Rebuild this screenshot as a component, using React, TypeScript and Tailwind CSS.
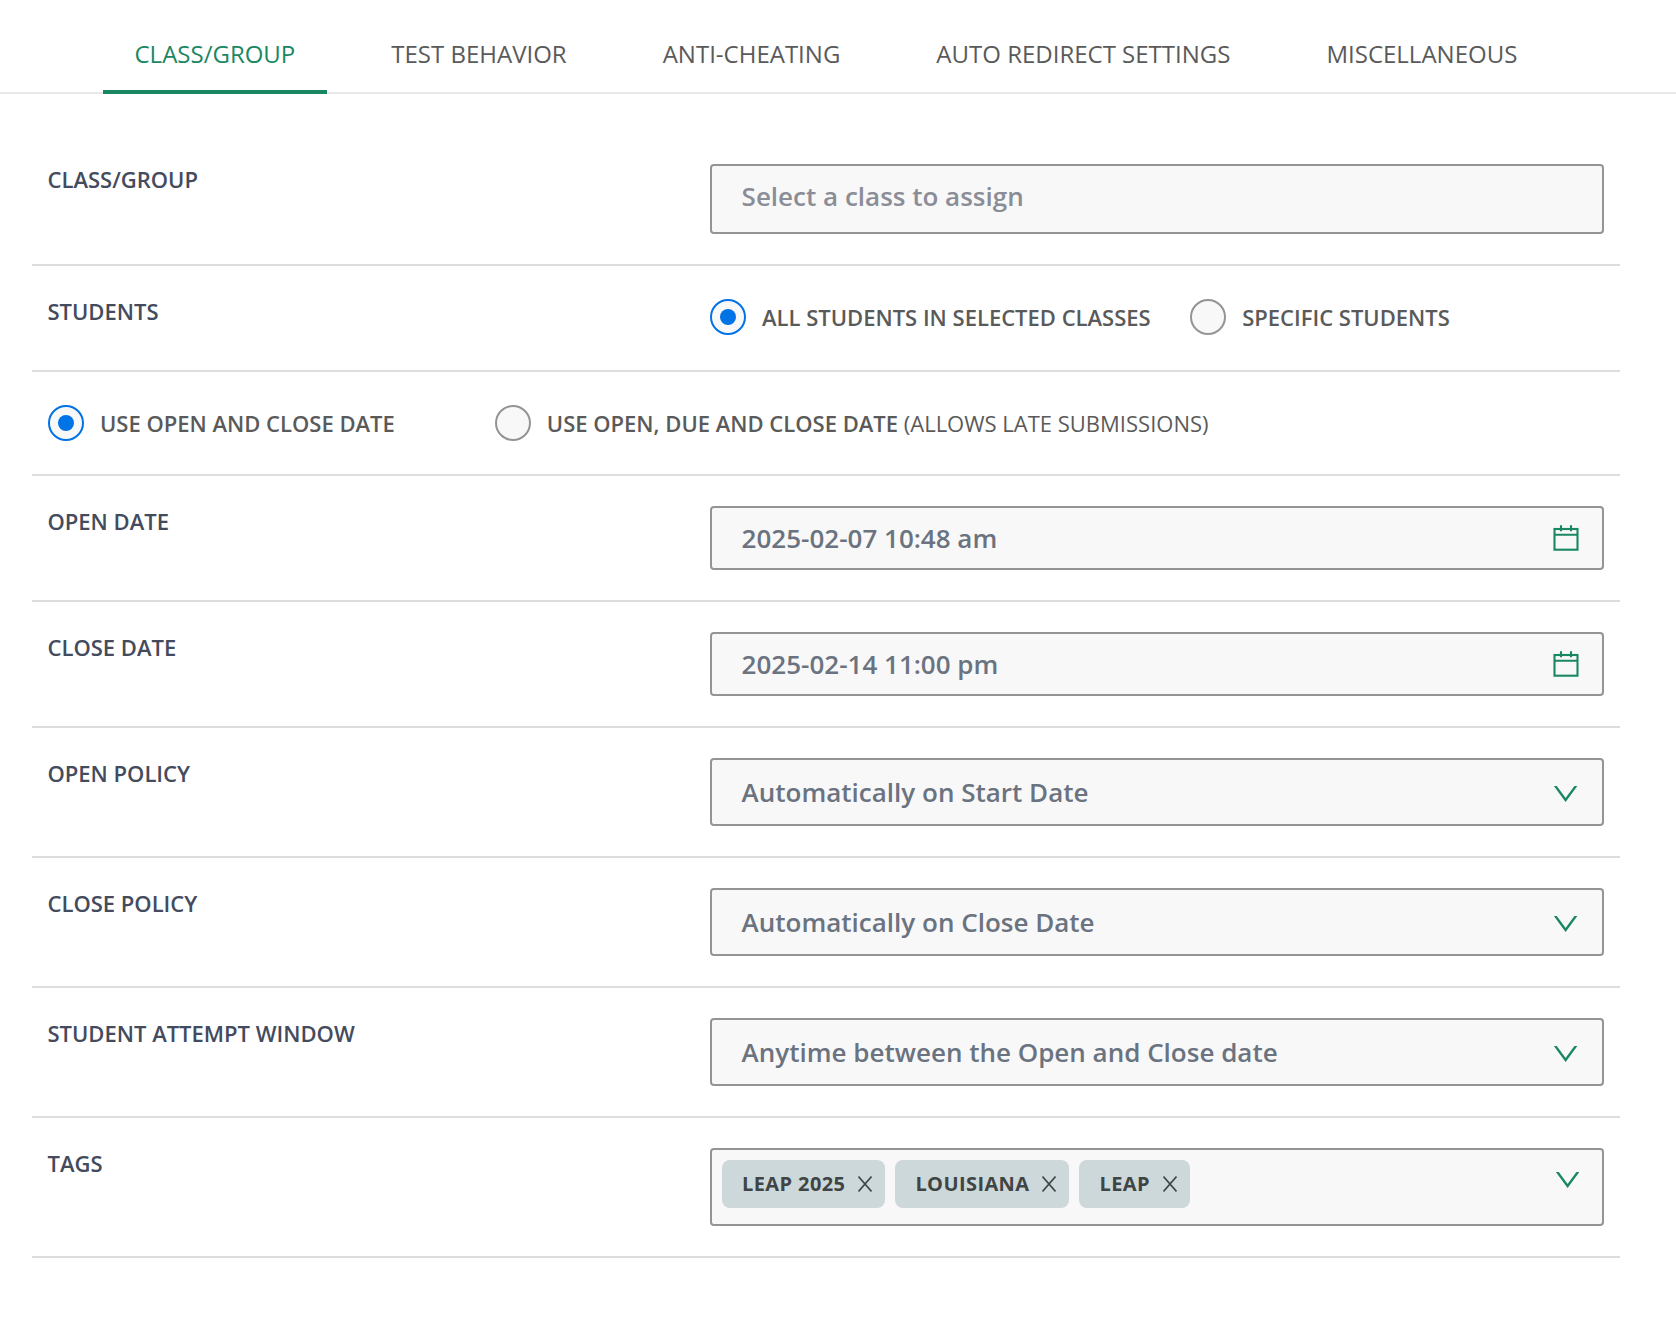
import type { ReactNode } from "react";

const tabs = ["CLASS/GROUP", "TEST BEHAVIOR", "ANTI-CHEATING", "AUTO REDIRECT SETTINGS", "MISCELLANEOUS"];
const tags = ["LEAP 2025", "LOUISIANA", "LEAP"];

const CalendarIcon = () => (
  <svg width="26" height="26" viewBox="0 0 26 26" fill="none" stroke="#1a8763" strokeWidth="2.1" className="shrink-0">
    <rect x="1.5" y="4" width="23" height="20.7" />
    <path d="M1.5 9.8H24.5M8 0.3V6.3M18 0.3V6.3" />
  </svg>
);

const ChevronIcon = () => (
  <svg width="24" height="16" viewBox="0 0 24 16" fill="none" stroke="#1a8763" strokeWidth="2.4" className="shrink-0">
    <path d="M1 -0.4L11.6 14L22.2 -0.4" />
  </svg>
);

const CloseIcon = () => (
  <svg width="14" height="16" viewBox="0 0 14 16" fill="none" stroke="#3f4545" strokeWidth="1.6" className="shrink-0">
    <path d="M0.5 0.5L13.5 15.5M13.5 0.5L0.5 15.5" />
  </svg>
);

const Radio = ({ checked = false, children }: { checked?: boolean; children: ReactNode }) => (
  <label className="flex items-center">
    <span
      className={
        checked
          ? "flex size-9 items-center justify-center rounded-full border-2 border-[#0073e6] bg-[#f8f8f8]"
          : "size-9 rounded-full border-2 border-[#949494] bg-[#f8f8f8]"
      }
    >
      {checked && <span className="size-4 rounded-full bg-[#0073e6]" />}
    </span>
    <span className="ml-4 text-[22px] leading-[34px] font-semibold text-[#5a5a5a]">{children}</span>
  </label>
);

const Row = ({ label, children }: { label: string; children: ReactNode }) => (
  <div className="flex justify-between border-b-2 border-[#dddddd] pr-4 pl-[15.5px] py-[30px]">
    <p className="text-[22px] leading-[31px] font-semibold text-[#434b5d]">{label}</p>
    <div className="w-[894px]">{children}</div>
  </div>
);

const Field = ({ children, className }: { children: ReactNode; className: string }) => (
  <div
    className={`flex justify-between rounded-[4px] border-2 border-[#949494] bg-[#f8f8f8] pl-[29.6px] text-[26px] font-semibold text-[#6a737f] ${className}`}
  >
    {children}
  </div>
);

const DateField = ({ value }: { value: string }) => (
  <Field className="h-16 items-center pr-[23px]">
    <span>{value}</span>
    <CalendarIcon />
  </Field>
);

const SelectField = ({ value }: { value: string }) => (
  <Field className="h-[68px] items-center pr-6">
    <span>{value}</span>
    <span className="pt-1">
      <ChevronIcon />
    </span>
  </Field>
);

const App = () => {
  return (
    <div className="min-h-[1334px] w-[1676px] bg-white font-['Open_Sans',sans-serif]">
      {/* Tabs */}
      <div className="flex h-[94px] items-stretch gap-[32.5px] border-b-2 border-[#e8e8e8] pl-[103px]">
        {tabs.map((tab, index) => (
          <div
            key={tab}
            className={
              index === 0
                ? "-mb-[2px] border-b-4 border-[#1a8763] pt-[36px] pr-8 pl-[31.5px] text-[24px] leading-[36px] whitespace-nowrap text-[#1a8763]"
                : "pt-[36px] pr-8 pl-[31.5px] text-[24px] leading-[36px] whitespace-nowrap text-[#5a5a5a]"
            }
          >
            {tab}
          </div>
        ))}
      </div>

      {/* Settings */}
      <div className="mt-10 mr-14 ml-8">
        <Row label="CLASS/GROUP">
          <Field className="h-[70px] pt-3 leading-[36px]">
            <span className="text-[#8a8d96]">Select a class to assign</span>
          </Field>
        </Row>

        <Row label="STUDENTS">
          <div className="flex h-[44px] items-start gap-[39.5px] pt-[3px]">
            <Radio checked>ALL STUDENTS IN SELECTED CLASSES</Radio>
            <Radio>SPECIFIC STUDENTS</Radio>
          </div>
        </Row>

        <div className="flex h-[104px] items-start gap-[100px] border-b-2 border-[#dddddd] px-4 pt-[33px]">
          <Radio checked>USE OPEN AND CLOSE DATE</Radio>
          <Radio>
            USE OPEN, DUE AND CLOSE DATE <span className="font-normal">(ALLOWS LATE SUBMISSIONS)</span>
          </Radio>
        </div>

        <Row label="OPEN DATE">
          <DateField value="2025-02-07 10:48 am" />
        </Row>
        <Row label="CLOSE DATE">
          <DateField value="2025-02-14 11:00 pm" />
        </Row>
        <Row label="OPEN POLICY">
          <SelectField value="Automatically on Start Date" />
        </Row>
        <Row label="CLOSE POLICY">
          <SelectField value="Automatically on Close Date" />
        </Row>
        <Row label="STUDENT ATTEMPT WINDOW">
          <SelectField value="Anytime between the Open and Close date" />
        </Row>

        <Row label="TAGS">
          <div className="flex h-[78px] items-start justify-between rounded-[4px] border-2 border-[#949494] bg-[#f8f8f8] pt-[10px] pr-[22px] pl-[10px]">
            <div className="flex gap-[10px]">
              {tags.map((tag) => (
                <div key={tag} className="flex h-12 items-center rounded-lg bg-[#cdd8da] pr-[13px] pl-5">
                  <span className="text-[20px] leading-[46px] font-bold tracking-[0.4px] text-[#3f4545]">{tag}</span>
                  <span className="ml-[13px]">
                    <CloseIcon />
                  </span>
                </div>
              ))}
            </div>
            <div className="pt-3">
              <ChevronIcon />
            </div>
          </div>
        </Row>
      </div>
    </div>
  );
};

export default App;
